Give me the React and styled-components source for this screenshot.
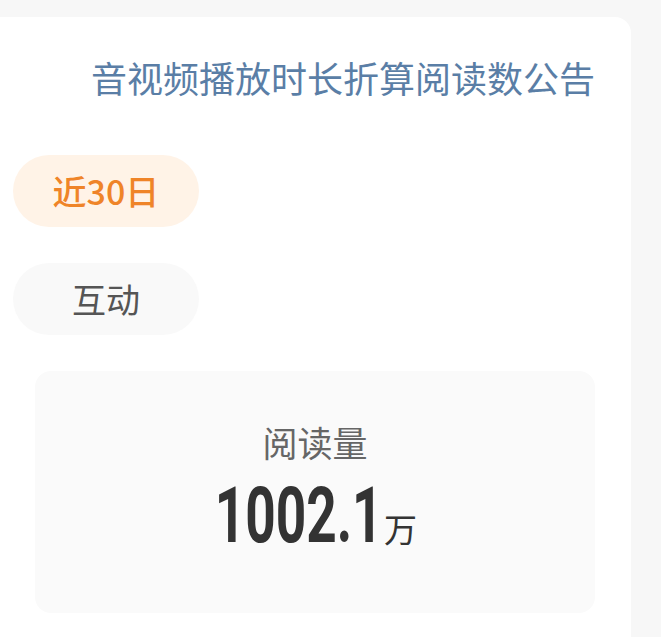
import React from 'react'
import styled, { createGlobalStyle } from 'styled-components'

const GlobalStyle = createGlobalStyle`
    html, body {
        margin: 0;
        padding: 0;
        background: #f7f7f7;
        overflow: hidden;
    }
    body {
        font-family: "Noto Sans CJK SC", "Noto Sans", sans-serif;
    }
`

const Page = styled.div`
    width: 661px;
    height: 637px;
    padding-top: 17px;
    box-sizing: border-box;
    overflow: hidden;
`

const Card = styled.div`
    margin-left: -23px;
    width: 654px;
    height: 640px;
    box-sizing: border-box;
    background: #ffffff;
    border-radius: 16px;
    padding: 34px 36px 0 36px;
`

const Notice = styled.a`
    display: block;
    text-align: right;
    font-size: 36px;
    line-height: 52px;
    color: #5a7ea6;
    text-decoration: none;
`

const Tabs = styled.div`
    display: flex;
    flex-direction: column;
    align-items: flex-start;
    gap: 36px;
    margin-top: 52px;
`

const Tab = styled.button`
    width: 186px;
    height: 72px;
    border: none;
    border-radius: 36px;
    padding: 0 0 2px 0;
    font-family: "Noto Sans CJK SC", sans-serif;
    font-size: 34px;
    font-weight: ${p => (p.$active ? 500 : 400)};
    color: ${p => (p.$active ? '#ef8428' : '#555555')};
    background: ${p => (p.$active ? '#fff3e7' : '#f9f9f9')};
`

const StatsRow = styled.div`
    display: flex;
    gap: 30px;
    margin-top: 36px;
    width: 582px;
    overflow: hidden;
`

const StatBox = styled.div`
    flex: 0 0 560px;
    height: 242px;
    box-sizing: border-box;
    border-radius: 16px;
    display: flex;
    flex-direction: column;
    align-items: center;
    padding-top: 45px;
    background: ${p => (p.$tone === 'orange' ? '#fff7ef' : '#fafafa')};
    margin-left: ${p => (p.$offset ? '-568px' : '0')};
`

const Label = styled.div`
    font-size: 35px;
    line-height: 52px;
    color: #666666;
`

const Value = styled.div`
    display: flex;
    align-items: baseline;
    margin-top: 8px;
    color: #333333;
`

const Number = styled.span`
    display: inline-block;
    font-family: Roboto, "Liberation Sans", sans-serif;
    font-weight: 700;
    font-size: 77px;
    line-height: 80px;
    transform: scaleX(0.69);
    margin: 0 -36px;
`

const Unit = styled.span`
    font-size: 33px;
    margin-left: 0;
`

function Stat({ label, value, unit }) {
    return (
        <StatBox>
            <Label>{label}</Label>
            <Value>
                <Number>{value}</Number>
                <Unit>{unit}</Unit>
            </Value>
        </StatBox>
    )
}

export default function App() {
    return (
        <Page>
            <GlobalStyle />
            <Card>
                <Notice href="#">音视频播放时长折算阅读数公告</Notice>
                <Tabs>
                    <Tab $active>近30日</Tab>
                    <Tab>互动</Tab>
                </Tabs>
                <StatsRow>
                    <StatBox $tone="orange" $offset />
                    <Stat label="阅读量" value="1002.1" unit="万" />
                </StatsRow>
            </Card>
        </Page>
    )
}
